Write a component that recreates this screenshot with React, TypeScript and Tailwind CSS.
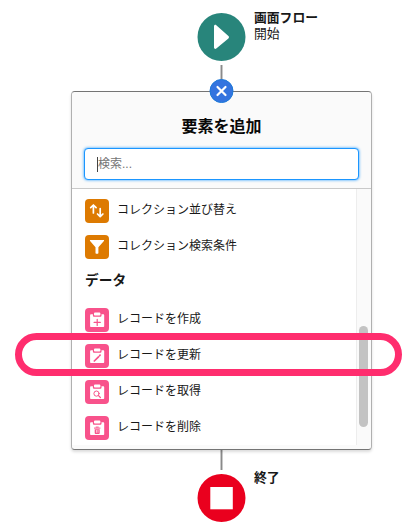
import type { ReactNode } from "react";

type IconKind = "sort" | "filter" | "create" | "update" | "get" | "delete";

function Clipboard({ children }: { children: ReactNode }) {
  return (
    <>
      <path d="M6.200 6.200h11.900c.7 0 1.100.4 1.100 1.100v10.600c0 .7-.4 1.100-1.100 1.100H6.200c-.7 0-1.100-.4-1.100-1.100V7.300c0-.7.4-1.100 1.100-1.100Z" fill="white" />
      <path d="M7.900 5.500h8.600v1.900c0 .8-.5 1.300-1.300 1.300H9.200c-.8 0-1.300-.5-1.300-1.300Z" fill="#f8528b" />
      <path d="M9 5.700c0-.8.5-1.300 1.300-1.300h3.800c.8 0 1.300.5 1.300 1.300v1.100c0 .5-.3.800-.8.800H9.800c-.5 0-.8-.3-.8-.8Z" fill="white" />
      {children}
    </>
  );
}

function ElementIcon({ kind }: { kind: IconKind }) {
  const orange = kind === "sort" || kind === "filter";
  return (
    <svg viewBox="0 0 24 24" className={`size-6 shrink-0 rounded ${orange ? "bg-[#dd7a01]" : "bg-[#f8528b]"}`} fill="none" strokeLinecap="round" strokeLinejoin="round">
      {kind === "sort" && (
        <path d="M8.400 14V6.200M5.700 8.700l2.700-2.700 2.700 2.700M15.200 9.500v8M12.500 15l2.700 2.700 2.700-2.700" stroke="white" strokeWidth="1.700" />
      )}
      {kind === "filter" && (
        <path d="M5.500 5h13c.6 0 .8.6.4 1.100l-5.500 6.200v5.800c0 .4-.3.6-.6.6h-1.600c-.4 0-.7-.3-.7-.6v-5.800L5.100 6.100C4.700 5.600 5 5 5.500 5Z" fill="white" />
      )}
      {kind === "create" && (
        <Clipboard><path d="M12.200 11.300v6.200M9.100 14.400h6.200" stroke="#f8528b" strokeWidth="1.200" /></Clipboard>
      )}
      {kind === "update" && (
        <Clipboard><path d="m9.300 17 4.200-4.200M14.600 11.700l.5-.5" stroke="#f8528b" strokeWidth="1.700" /></Clipboard>
      )}
      {kind === "get" && (
        <Clipboard>
          <circle cx="11.500" cy="13.600" r="2.600" stroke="#f8528b" />
          <path d="m13.500 15.600 1.900 1.900" stroke="#f8528b" strokeWidth="1.200" />
        </Clipboard>
      )}
      {kind === "delete" && (
        <Clipboard>
          <path d="M9.400 12.100h5.600M11.100 11.100h2.200" stroke="#f8528b" strokeWidth="1" />
          <path d="M9.700 13.300h5v3.700c0 .6-.3.900-.9.900h-3.200c-.6 0-.9-.3-.9-.9Z" fill="#f8528b" />
          <path d="M11.500 14.400v2M13 14.400v2" stroke="white" strokeWidth=".6" />
        </Clipboard>
      )}
    </svg>
  );
}

function ElementRow({ kind, label }: { kind: IconKind; label: string }) {
  return (
    <li className="flex h-6 items-center gap-2">
      <ElementIcon kind={kind} />
      <span className="-mt-0.5 whitespace-nowrap text-[12px] leading-5">{label}</span>
    </li>
  );
}

export default function App() {
  return (
    <main className="relative flex h-[531px] w-[419px] flex-col overflow-hidden bg-white font-['Liberation_Sans','Noto_Sans_CJK_JP',sans-serif] text-[#181818]">
      <div className="flex h-[65px] gap-2 pl-[197px] pt-[13px]">
        <svg viewBox="0 0 49 48" className="h-12 w-[49px] shrink-0">
          <circle cx="24.500" cy="24" r="24" fill="#28857b" />
          <path d="M17 13.300c0-1.200 1.300-1.900 2.300-1.100L31.400 23c.8.700.8 1.700 0 2.400L19.300 35.600c-1 .8-2.300.1-2.300-1.100Z" fill="white" />
        </svg>
        <div className="-mt-[3px] text-[12.800px] leading-4">
          <div className="font-bold">画面フロー</div>
          <div>開始</div>
        </div>
      </div>
      <div className="ml-[220px] flex h-[26px] w-[3px] shrink-0 bg-[#c9c9c9]">
        <div className="mx-auto w-px bg-[#8a8a8a]" />
      </div>
      <section className="relative ml-[71px] flex h-[359px] w-[301px] shrink-0 flex-col rounded border border-x-[#b0b0b0] border-y-[#747474] bg-white shadow-[0_2px_3px_rgba(0,0,0,.14)]">
        <button aria-label="閉じる" className="absolute -top-[13px] left-[137px] h-6 w-[25px]">
          <svg viewBox="0 0 25 24" className="size-full">
            <circle cx="12.500" cy="12" r="11.500" fill="#3474df" stroke="#1b79d8" />
            <path d="m8.500 8 8 8M16.500 8l-8 8" stroke="white" strokeWidth="2.200" strokeLinecap="round" />
          </svg>
        </button>
        <header className="flex h-[97px] shrink-0 flex-col rounded-t border-b border-[#c9c9c9] bg-[#fafafa] px-3 pt-[23px]">
          <h1 className="text-center text-[16px] font-bold leading-6 text-[#080808]">要素を追加</h1>
          <div className="mt-[9px] flex h-8 w-[275px] shrink-0 items-center rounded border border-[#1b96ff] bg-white pl-3 shadow-[0_0_3px_#1b96ff]">
            <span className="mt-px h-[15px] w-px bg-[#444]" />
            <span className="text-[12px] leading-5 text-[#747474]">検索...</span>
          </div>
        </header>
        <div className="flex min-h-0 flex-1">
          <ul className="flex flex-1 flex-col gap-3 pl-[13px] pt-[10px]">
            <ElementRow kind="sort" label="コレクション並び替え" />
            <ElementRow kind="filter" label="コレクション検索条件" />
            <li className="flex h-[25px] items-center text-[13.700px] font-bold"><span className="-mt-[4px]">データ</span></li>
            <ElementRow kind="create" label="レコードを作成" />
            <ElementRow kind="update" label="レコードを更新" />
            <ElementRow kind="get" label="レコードを取得" />
            <ElementRow kind="delete" label="レコードを削除" />
          </ul>
          <div className="w-[15px] border-l border-[#ededed] bg-[#fafafa] pl-[2px] pt-[137px]">
            <div className="h-[101px] w-[9px] rounded-full bg-[#c3c3c3]" />
          </div>
        </div>
        <div className="h-1 shrink-0 rounded-b bg-[#fafafa]" />
      </section>
      <div className="ml-[220px] flex h-5 w-[3px] shrink-0 bg-[#c9c9c9]">
        <div className="mx-auto w-px bg-[#8a8a8a]" />
      </div>
      <div className="mt-1 flex gap-2 pl-[197px]">
        <svg viewBox="0 0 49 48" className="h-12 w-[49px] shrink-0">
          <circle cx="24.500" cy="24" r="24" fill="#ea001e" />
          <path d="M13.300 13h22.500v22.300H13.300Z" fill="white" />
        </svg>
        <div className="-mt-1 text-[12.800px] font-bold leading-4">終了</div>
      </div>
      <div className="pointer-events-none absolute left-[15px] top-[333px] h-[43px] w-[387px] rounded-full border-[7px] border-[#ff2d6e]" />
    </main>
  );
}
